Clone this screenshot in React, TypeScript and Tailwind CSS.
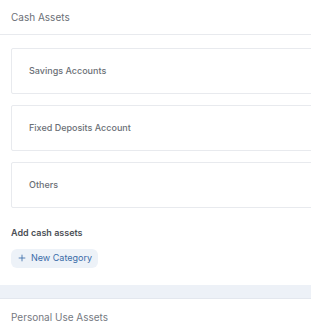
import { Plus } from 'lucide-react';

const categories = ['Savings Accounts', 'Fixed Deposits Account', 'Others'];

export default function App() {
  return (
    <div className="w-[311px] h-[332px] overflow-hidden bg-white font-['Inter',sans-serif]">
      <div className="h-[35px] flex items-center px-[11px] pt-[1px] border-b border-[#e8eaee]">
        <span className="text-[10px] text-[#6b6f76]">Cash Assets</span>
      </div>

      <div className="pl-[11px] pt-[13px] flex flex-col gap-[11px] -mr-6">
        {categories.map((name) => (
          <div
            key={name}
            className="h-[46px] flex items-center pl-[17px] border border-[#e8eaee] rounded-[2px]"
          >
            <span className="text-[9px] font-medium text-[#6b6f76]">{name}</span>
          </div>
        ))}
      </div>

      <div className="px-[11px] pt-[18px]">
        <div className="text-[9px] font-semibold text-[#4b4f56]">Add cash assets</div>
        <button className="mt-[9px] h-[19px] px-[6px] flex items-center gap-[4px] rounded-[6px] bg-[#edf2f8] text-[9px] text-[#3a6ca8]">
          <Plus size={10} strokeWidth={2} />
          New Category
        </button>
      </div>

      <div className="mt-[17px] h-[14px] bg-[#edf1f7] border-b border-[#e3e7ee]" />

      <div className="px-[11px] pt-[11px] text-[10px] leading-[15px] text-[#75797f]">
        Personal Use Assets
      </div>
    </div>
  );
}
